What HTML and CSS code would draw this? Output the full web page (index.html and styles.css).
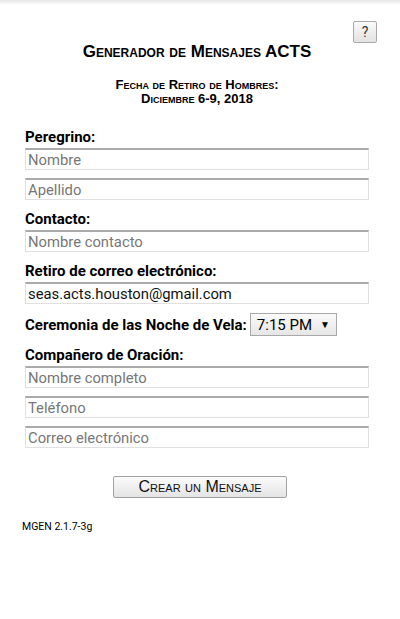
FILE: index.html
```html
<!DOCTYPE html>
<html>
<head>
<meta charset="utf-8">
<link rel="stylesheet" href="styles.css">
</head>
<body>
<div class="shade"></div>
<div class="page">
  <div class="topbar"><button class="help">?</button></div>
  <h1 class="title">Generador de Mensajes ACTS</h1>
  <div class="subtitle">Fecha de Retiro de Hombres:<br>Diciembre 6-9, 2018</div>
  <form class="form">
    <div class="group">
      <label class="label">Peregrino:</label>
      <input class="field" placeholder="Nombre">
      <input class="field" placeholder="Apellido">
    </div>
    <div class="group">
      <label class="label">Contacto:</label>
      <input class="field" placeholder="Nombre contacto">
    </div>
    <div class="group">
      <label class="label">Retiro de correo electrónico:</label>
      <input class="field" value="seas.acts.houston@gmail.com">
    </div>
    <div class="row">
      <label class="label inline">Ceremonia de las Noche de Vela:</label>
      <div class="select"><span>7:15 PM</span><span class="arrow">▼</span></div>
    </div>
    <div class="group">
      <label class="label">Compañero de Oración:</label>
      <input class="field" placeholder="Nombre completo">
      <input class="field" placeholder="Teléfono">
      <input class="field" placeholder="Correo electrónico">
    </div>
    <div class="actions"><button type="button" class="create">Crear un Mensaje</button></div>
  </form>
  <div class="version">MGEN 2.1.7-3g</div>
</div>
</body>
</html>
```
FILE: styles.css
```css
html, body { margin: 0; padding: 0; background: #fff; }
body { font-family: Roboto, "Liberation Sans", sans-serif; color: #000; }
.shade { position: absolute; top: 0; left: 0; right: 0; height: 5px; background: linear-gradient(#e6e6e6, rgba(255,255,255,0)); }
.page { padding: 21px 31px 0 25px; }
.topbar { display: flex; justify-content: flex-end; margin-right: -8px; height: 22px; }
.help { width: 24px; height: 22px; padding: 0; font: 14px Roboto, sans-serif; color: #333; background: linear-gradient(#fafafa, #e2e2e2); border: 1px solid #a9a9a9; border-radius: 2px; }
.title { margin: -2px 0 0; text-align: center; font: bold 17px "Liberation Sans", Arial, sans-serif; font-variant: small-caps; height: 22px; line-height: 22px; }
.subtitle { margin-top: 15px; text-align: center; font: bold 13px "Liberation Sans", Arial, sans-serif; font-variant: small-caps; line-height: 14px; }
.form { margin-top: 21px; display: flex; flex-direction: column; gap: 9px; }
.group { display: flex; flex-direction: column; gap: 8px; }
.group .label + .field { margin-top: -7px; }
.label { font: bold 15px Roboto, sans-serif; line-height: 20px; display: block; }
.field { box-sizing: border-box; width: 344px; height: 22px; margin: 0; padding: 0 2px; font: 14.8px Roboto, sans-serif; color: #111; border: 1px solid #e0e0e0; border-top: 2px solid #aaa; outline: none; background: #fff; }
.field::placeholder { color: #777; }
.row { display: flex; align-items: center; gap: 3px; height: 23px; }
.select { display: flex; align-items: center; justify-content: space-between; box-sizing: border-box; width: 87px; height: 23px; padding: 0 6px 0 6px; font: 15px Roboto, sans-serif; background: linear-gradient(#fafafa, #e6e6e6); border: 1px solid #a9a9a9; }
.arrow { font-size: 10px; }
.actions { display: flex; justify-content: center; margin-top: 19px; margin-right: -6px; }
.create { width: 174px; height: 22px; padding: 0; font: 16px "Liberation Sans", Arial, sans-serif; font-variant: small-caps; color: #111; background: linear-gradient(#fbfbfb, #e4e4e4); border: 1px solid #a0a0a0; border-radius: 2px; }
.version { margin: 22px 0 0 -3px; font: 10.5px Roboto, sans-serif; }
```
